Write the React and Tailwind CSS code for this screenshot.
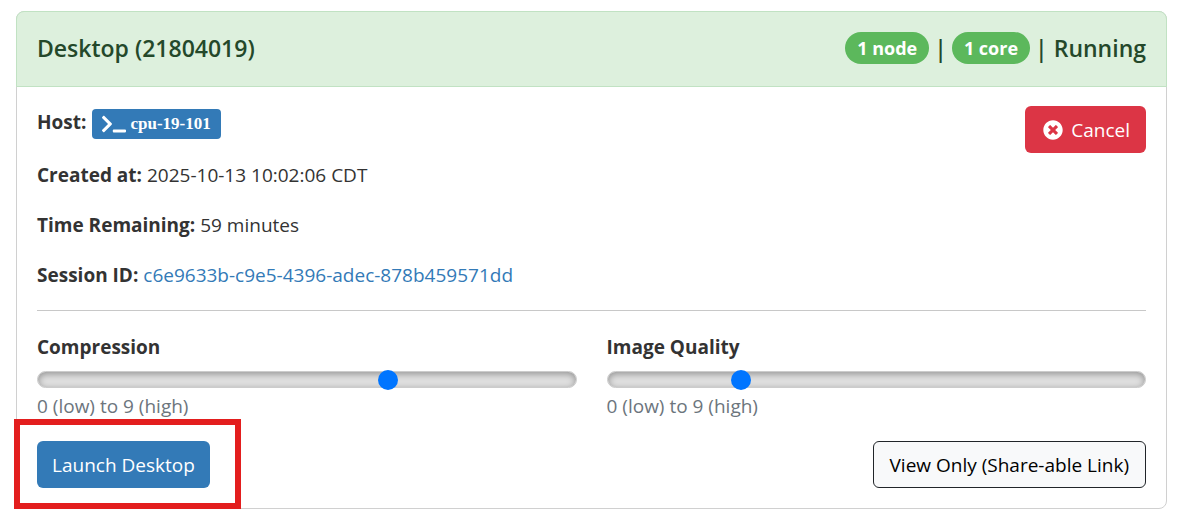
import { useState } from 'react';
import { FaTerminal, FaTimesCircle } from 'react-icons/fa';

const SESSION = {
  title: 'Desktop (21804019)',
  status: 'Running',
  host: 'cpu-19-101',
  createdAt: '2025-10-13 10:02:06 CDT',
  timeRemaining: '59 minutes',
  id: 'c6e9633b-c9e5-4396-adec-878b459571dd',
};

function Badge({ children }) {
  return (
    <span className="rounded-full bg-[#5cb85c] px-3 py-1 text-[18px] leading-6 font-bold text-white">
      {children}
    </span>
  );
}

function Detail({ label, children }) {
  return (
    <p className="mb-5">
      <strong className="font-bold">{label}:</strong> {children}
    </p>
  );
}

function RangeField({ id, label, initial }) {
  const [value, setValue] = useState(initial);

  return (
    <div>
      <label htmlFor={id} className="block font-bold">
        {label}
      </label>
      <input
        id={id}
        type="range"
        min="0"
        max="9"
        value={value}
        onChange={(e) => setValue(e.target.value)}
        className="mt-[9px] block h-[17px] w-full appearance-none rounded-full border border-[#cccccc] bg-[#e0e0e0] px-[15px] shadow-[inset_0_2px_7px_rgba(0,0,0,0.35)] [&::-webkit-slider-thumb]:size-5 [&::-webkit-slider-thumb]:appearance-none [&::-webkit-slider-thumb]:rounded-full [&::-webkit-slider-thumb]:bg-[#0075ff]"
      />
      <small className="mt-[3px] block text-[19px] leading-[30px] text-[#6c757d]">0 (low) to 9 (high)</small>
    </div>
  );
}

export default function App() {
  return (
    <main className="pt-[11px] pr-[14px] pb-4 pl-4 font-['Open_Sans','Noto_Sans',sans-serif] text-[19px] leading-[30px] text-[#333333]">
      <section className="rounded-lg border border-[#d0d0d0] bg-white">
        <header className="-mx-px -mt-px flex items-center justify-between rounded-t-lg border border-[#c1e2c3] bg-[#ddf0dd] px-5 pt-5 pb-[22px] text-[23px] leading-8 font-semibold text-[#24482a]">
          <h1>{SESSION.title}</h1>
          <div className="flex items-center gap-[5px]">
            <Badge>1 node</Badge>
            <span>|</span>
            <Badge>1 core</Badge>
            <span>| {SESSION.status}</span>
          </div>
        </header>

        <div className="px-5 pt-[19px] pb-5">
          <div className="flex items-start justify-between">
            <div>
              <div className="mb-5 flex min-h-[34px] items-start gap-[6px] pt-px">
                <strong className="font-bold">Host:</strong>
                <a
                  href="#shell"
                  className="mt-0.5 flex h-[30px] items-center gap-1 rounded bg-[#337ab7] px-[10px] font-['Liberation_Serif',serif] text-[17px] font-bold text-white"
                >
                  <FaTerminal className="size-6" aria-hidden="true" />
                  {SESSION.host}
                </a>
              </div>
              <Detail label="Created at">{SESSION.createdAt}</Detail>
              <Detail label="Time Remaining">{SESSION.timeRemaining}</Detail>
              <Detail label="Session ID">
                <a href="#files" className="text-[#337ab7]">
                  {SESSION.id}
                </a>
              </Detail>
            </div>
            <button
              type="button"
              className="flex h-[47px] items-center gap-2 rounded-md bg-[#dc3545] pr-4 pl-[18px] text-white"
            >
              <FaTimesCircle className="size-5" aria-hidden="true" />
              Cancel
            </button>
          </div>

          <hr className="mb-[21px] border-[#c8c8c8]" />

          <div className="grid grid-cols-2 gap-[30px]">
            <RangeField id="compression" label="Compression" initial={6} />
            <RangeField id="quality" label="Image Quality" initial={2} />
          </div>

          <div className="mt-5 flex items-center justify-between">
            <div className="relative">
              <button type="button" className="h-[47px] rounded-md bg-[#337ab7] px-[15px] text-white">
                Launch Desktop
              </button>
              {/* highlight around the launch button */}
              <div className="pointer-events-none absolute -top-[22px] -right-[31px] -bottom-[21px] -left-[23px] border-6 border-[#e31e1e]" />
            </div>
            <button
              type="button"
              className="h-[47px] rounded-md border border-[#212529] bg-[#f8f9fa] px-4 text-black"
            >
              View Only (Share-able Link)
            </button>
          </div>
        </div>
      </section>
    </main>
  );
}
